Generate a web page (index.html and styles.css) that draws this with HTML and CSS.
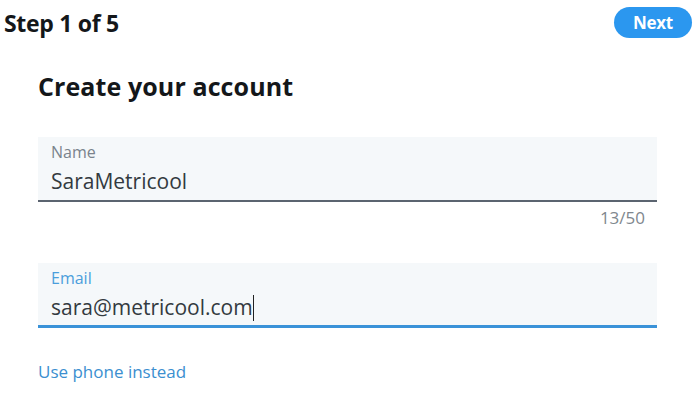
FILE: index.html
```html
<!DOCTYPE html>
<html lang="en">

<head>
    <meta charset="UTF-8">
    <meta name="viewport" content="width=device-width, initial-scale=1.0">
    <title>Create your account</title>
    <link rel="stylesheet" href="styles.css">
</head>

<body>
    <div class="topbar">
        <div class="step">Step 1 of 5</div>
        <div class="next">Next</div>
    </div>
    <div class="content">
        <h1 class="title">Create your account</h1>
        <div class="field">
            <div class="label">Name</div>
            <div class="value">SaraMetricool</div>
        </div>
        <div class="counter">13/50</div>
        <div class="field active">
            <div class="label">Email</div>
            <div class="value">sara@metricool.com<span class="caret"></span></div>
        </div>
        <div class="link">Use phone instead</div>
    </div>
</body>

</html>
```

FILE: styles.css
```css
body {
    margin: 0;
    background-color: #fff;
    font-family: "Open Sans", "Noto Sans", sans-serif;
    color: #14171a;
}

.topbar {
    display: flex;
    justify-content: space-between;
    align-items: flex-start;
    padding: 7px 8px 0 4px;
    height: 31px;
}

.step {
    font-size: 23px;
    font-weight: 700;
    letter-spacing: -0.3px;
    margin-top: 3px;
    line-height: 26px;
}

.next {
    width: 78px;
    height: 31px;
    border-radius: 16px;
    background-color: #2b97ef;
    color: #fff;
    font-size: 17px;
    font-weight: 700;
    text-align: center;
    line-height: 31px;
    letter-spacing: -0.3px;
}

.content {
    width: 619px;
    margin-left: 38px;
}

.title {
    margin: 31px 0 0;
    font-size: 25px;
    font-weight: 700;
    line-height: 34px;
    letter-spacing: 0.1px;
}

.field {
    margin-top: 34px;
    height: 63px;
    background-color: #f5f8fa;
    border-bottom: 2px solid #5b6470;
    padding-left: 13px;
}

.field.active {
    margin-top: 34px;
    height: 62px;
    border-bottom: 3px solid #3a92d8;
}

.label {
    padding-top: 5px;
    font-size: 16px;
    line-height: 20px;
    color: #7a838c;
}

.active .label {
    color: #4a9edc;
}

.value {
    margin-top: 6px;
    font-size: 21px;
    line-height: 26px;
    color: #333a40;
}

.caret {
    display: inline-block;
    width: 1px;
    height: 26px;
    background-color: #222;
    vertical-align: -6px;
}

.counter {
    margin-top: 5px;
    padding-right: 12px;
    text-align: right;
    font-size: 17px;
    line-height: 22px;
    color: #80878e;
}

.link {
    margin-top: 33px;
    font-size: 17px;
    line-height: 22px;
    color: #3b8fd0;
}
```
